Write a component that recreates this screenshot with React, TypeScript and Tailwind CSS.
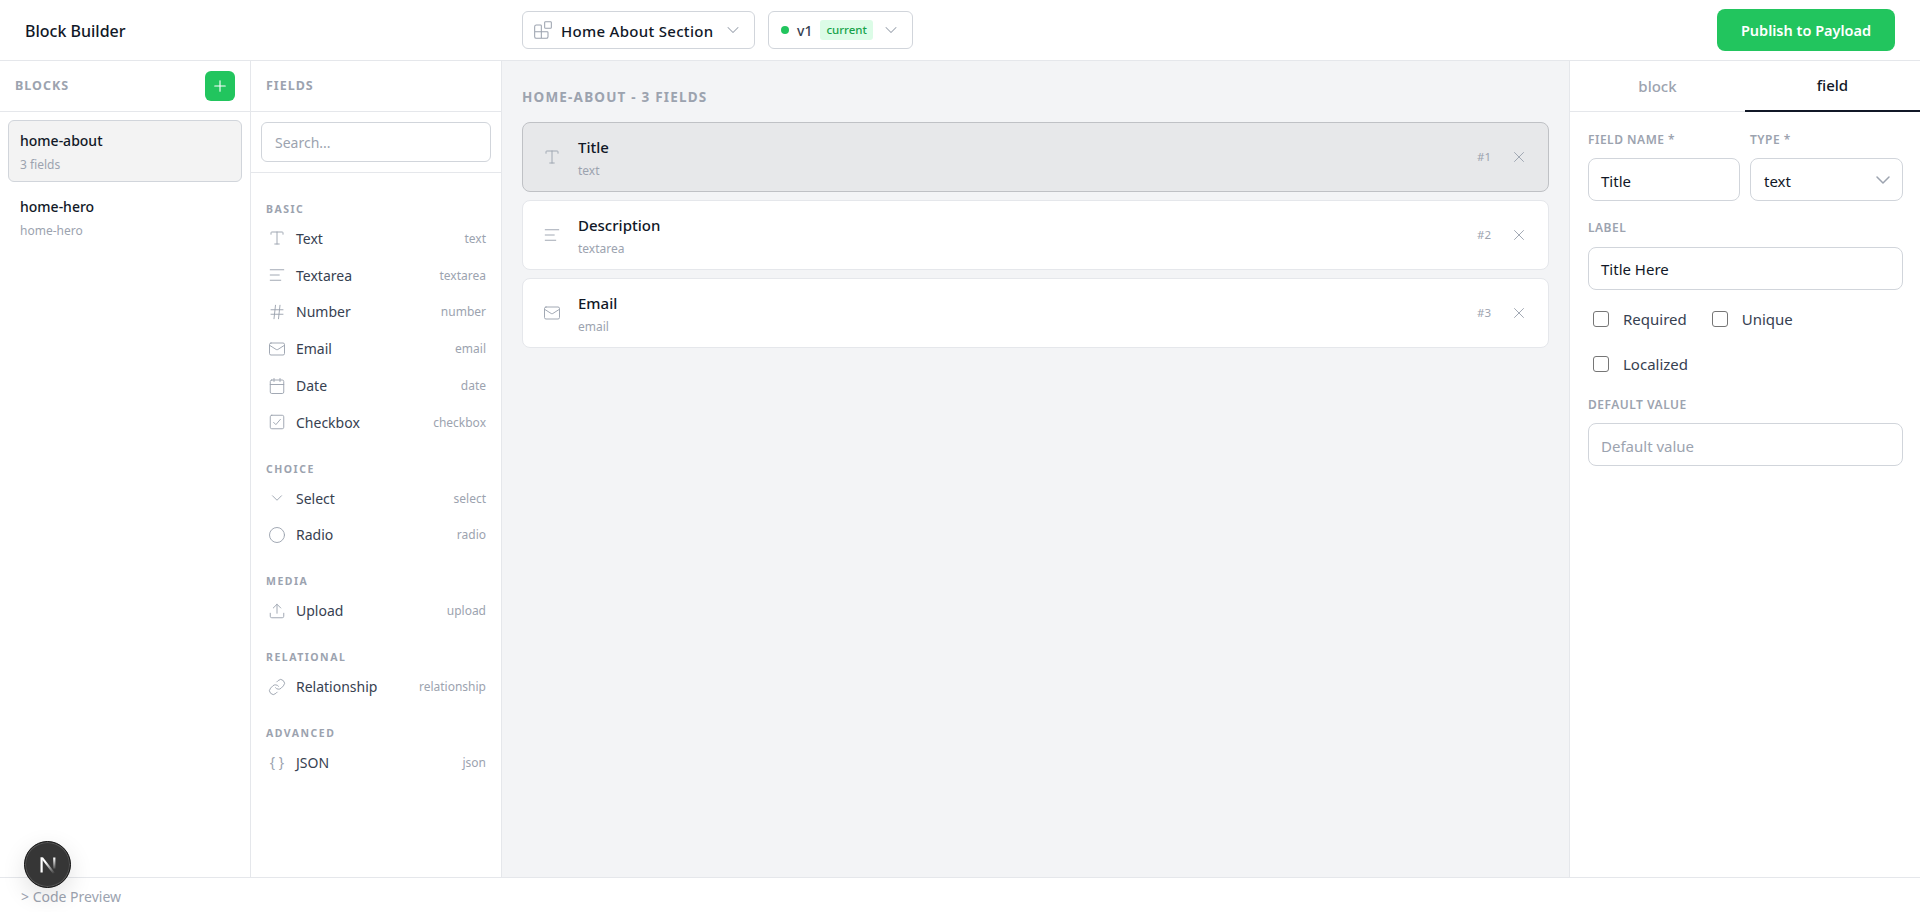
import { Blocks, Calendar, ChevronDown, Circle, Hash, Link, AlignLeft, Mail, Plus, Type, Upload, X } from "lucide-react";
import type { ComponentType } from "react";

const font = { fontFamily: '"Noto Sans", "Open Sans", sans-serif' };

// checkbox icon, the check is bigger than lucide's one
function CheckIcon({ size = 18, strokeWidth = 1.25 }: { size?: number; strokeWidth?: number }) {
  return (
    <svg width={size} height={size} viewBox="0 0 24 24" fill="none" stroke="currentColor" strokeWidth={strokeWidth} strokeLinecap="round" strokeLinejoin="round">
      <rect x="3" y="3" width="18" height="18" rx="2" />
      <path d="m7.5 12.5 3 3 6-7" />
    </svg>
  );
}

type Item = { label: string; type: string; Icon?: ComponentType<any> };

const groups: { name: string; items: Item[]; mt: string }[] = [
  {
    name: "BASIC",
    mt: "mt-[30px]",
    items: [
      { label: "Text", type: "text", Icon: Type },
      { label: "Textarea", type: "textarea", Icon: AlignLeft },
      { label: "Number", type: "number", Icon: Hash },
      { label: "Email", type: "email", Icon: Mail },
      { label: "Date", type: "date", Icon: Calendar },
      { label: "Checkbox", type: "checkbox", Icon: CheckIcon },
    ],
  },
  {
    name: "CHOICE",
    mt: "mt-[22px]",
    items: [
      { label: "Select", type: "select", Icon: ChevronDown },
      { label: "Radio", type: "radio", Icon: Circle },
    ],
  },
  { name: "MEDIA", mt: "mt-[22px]", items: [{ label: "Upload", type: "upload", Icon: Upload }] },
  { name: "RELATIONAL", mt: "mt-[22px]", items: [{ label: "Relationship", type: "relationship", Icon: Link }] },
  { name: "ADVANCED", mt: "mt-[22px]", items: [{ label: "JSON", type: "json" }] },
];

const fields = [
  { name: "Title", type: "text", Icon: Type, active: true },
  { name: "Description", type: "textarea", Icon: AlignLeft, active: false },
  { name: "Email", type: "email", Icon: Mail, active: false },
];

function FieldLabel({ children }: { children: string }) {
  return <div className="h-[16px] text-[12px] leading-[18px] font-semibold tracking-[0.5px] text-[#9ca3af]">{children}</div>;
}

function Check({ label }: { label: string }) {
  return (
    <div className="flex items-center">
      <span className="w-4 h-4 rounded-[3px] border border-[#767676] bg-white mr-[14px]" />
      <span className="text-[15px] leading-[20px] text-[#374151]">{label}</span>
    </div>
  );
}

export default function App() {
  return (
    <div style={font} className="h-[912px] w-[1920px] flex flex-col bg-white overflow-hidden relative text-[#111827]">
      {/* top bar */}
      <header className="h-[61px] shrink-0 border-b border-[#e5e7eb] flex items-center pl-[25px] pr-[25px]">
        <div className="w-[497px] pt-[2px] text-[16px] font-medium">Block Builder</div>
        <div className="h-[38px] w-[233px] border border-[#d1d5db] rounded-[6px] flex items-center pl-[10px] pr-[11px]">
          <Blocks size={20} strokeWidth={1.25} className="text-[#9ca3af]" />
          <span className="ml-[8px] pt-[2px] text-[15px] font-medium tracking-[0.3px]">Home About Section</span>
          <ChevronDown size={20} strokeWidth={1.25} className="ml-auto text-[#9ca3af]" />
        </div>
        <div className="ml-[13px] h-[38px] w-[145px] border border-[#d1d5db] rounded-[6px] flex items-center pl-[12px] pr-[11px]">
          <span className="w-2 h-2 rounded-full bg-[#22c55e]" />
          <span className="ml-[8px] pt-[1px] text-[14px] font-medium text-[#374151]">v1</span>
          <span className="ml-[8px] h-5 px-[6px] rounded-[3px] bg-[#dcfce7] text-[#16a34a] text-[11.5px] leading-[20px] font-medium">current</span>
          <ChevronDown size={20} strokeWidth={1.25} className="ml-auto text-[#9ca3af]" />
        </div>
        <button className="ml-auto h-[42px] w-[178px] pt-[2px] rounded-[8px] bg-[#22c55e] text-white text-[14.5px] font-semibold">
          Publish to Payload
        </button>
      </header>

      <div className="flex-1 flex min-h-0">
        {/* blocks */}
        <aside className="w-[251px] shrink-0 border-r border-[#e5e7eb]">
          <div className="h-[51px] border-b border-[#e5e7eb] flex items-center justify-between pl-[15px] pr-[15px]">
            <span className="text-[12.5px] font-bold tracking-[1px] text-[#9ca3af]">BLOCKS</span>
            <span className="w-[30px] h-[30px] rounded-[6px] bg-[#22c55e] flex items-center justify-center text-white">
              <Plus size={18} strokeWidth={1.5} />
            </span>
          </div>
          <div className="pt-2 px-2">
            <div className="h-[62px] rounded-[6px] border border-[#d1d5db] bg-[#f3f3f3] pl-[11px] pt-[10px]">
              <div className="text-[14px] leading-[20px] font-medium">home-about</div>
              <div className="mt-[6px] text-[12px] leading-[16px] text-[#9ca3af]">3 fields</div>
            </div>
            <div className="mt-[5px] h-[60px] pl-[12px] pt-[10px]">
              <div className="text-[14px] leading-[20px] font-medium">home-hero</div>
              <div className="mt-[6px] text-[12px] leading-[16px] text-[#9ca3af]">home-hero</div>
            </div>
          </div>
        </aside>

        {/* field palette */}
        <aside className="w-[251px] shrink-0 border-r border-[#e5e7eb]">
          <div className="h-[51px] border-b border-[#e5e7eb] flex items-center pl-[15px]">
            <span className="text-[12.5px] font-bold tracking-[1px] text-[#9ca3af]">FIELDS</span>
          </div>
          <div className="h-[61px] border-b border-[#e5e7eb] px-[10px] pt-[10px]">
            <div className="h-[40px] rounded-[6px] border border-[#d1d5db] flex items-center pl-[13px] text-[14px] text-[#9ca3af]">
              Search...
            </div>
          </div>
          <div className="pl-[15px] pr-[15px]">
            {groups.map((g) => (
              <div key={g.name} className={g.mt}>
                <div className="h-[12px] text-[10.5px] leading-[12px] font-bold tracking-[1.5px] text-[#9ca3af]">{g.name}</div>
                <div className="mt-[5px]">
                  {g.items.map(({ label, type, Icon }) => (
                    <div key={label} className="h-[36.8px] flex items-center">
                      <span className="w-[22px] flex justify-center text-[#9ca3af]">
                        {Icon ? <Icon size={18} strokeWidth={1.25} /> : <span className="text-[14px] leading-[16px] whitespace-nowrap">{"{ }"}</span>}
                      </span>
                      <span className="ml-[8px] text-[14px] text-[#374151]">{label}</span>
                      <span className="ml-auto pt-[1px] text-[12px] text-[#9ca3af]">{type}</span>
                    </div>
                  ))}
                </div>
              </div>
            ))}
          </div>
        </aside>

        {/* canvas */}
        <main className="flex-1 bg-[#f3f4f6] px-[20px] pt-[26px]">
          <div className="h-[20px] text-[13.5px] leading-[21px] font-bold tracking-[1.2px] text-[#9ca3af]">HOME-ABOUT - 3 FIELDS</div>
          <div className="mt-[15px] flex flex-col gap-2">
            {fields.map(({ name, type, Icon, active }, i) => (
              <div
                key={name}
                className={`h-[70px] rounded-[8px] border flex items-center pl-[20px] pr-[20px] ${
                  active ? "bg-[#e7e8ea] border-[#bfc1c5]" : "bg-white border-[#e5e7eb]"
                }`}
              >
                <Icon size={18} strokeWidth={1.25} className="text-[#9ca3af]" />
                <div className="ml-[17px] pt-[2px]">
                  <div className="text-[15px] leading-[20px] font-medium">{name}</div>
                  <div className="mt-[6px] text-[12px] leading-[16px] text-[#9ca3af]">{type}</div>
                </div>
                <span className="ml-auto text-[11.5px] text-[#9ca3af]">#{i + 1}</span>
                <X size={18} strokeWidth={1.25} className="ml-[19px] text-[#9ca3af]" />
              </div>
            ))}
          </div>
        </main>

        {/* properties */}
        <aside className="w-[351px] shrink-0 border-l border-[#e5e7eb]">
          <div className="h-[51px] border-b border-[#e5e7eb] flex">
            <div className="flex-1 flex items-center justify-center text-[15px] font-medium text-[#9ca3af]">block</div>
            <div className="flex-1 flex items-center justify-center text-[15px] font-medium border-b-2 border-[#111827] h-[51px]">field</div>
          </div>
          <div className="pl-[18px] pr-[17px] pt-[19px]">
            <div className="grid grid-cols-[152px_1fr] gap-x-[10px]">
              <div>
                <FieldLabel>FIELD NAME *</FieldLabel>
                <div className="mt-[11px] h-[43px] rounded-[8px] border border-[#d1d5db] flex items-center pl-[12px] pt-[3px] text-[15px]">Title</div>
              </div>
              <div>
                <FieldLabel>TYPE *</FieldLabel>
                <div className="mt-[11px] h-[43px] rounded-[8px] border border-[#d1d5db] flex items-center justify-between pl-[13px] pr-[7px] text-[15px]">
                  <span className="pt-[3px]">text</span>
                  <ChevronDown size={24} strokeWidth={1.5} className="text-[#9ca3af]" />
                </div>
              </div>
            </div>
            <div className="mt-[18px]">
              <FieldLabel>LABEL</FieldLabel>
              <div className="mt-[12px] h-[43px] rounded-[8px] border border-[#d1d5db] flex items-center pl-[12px] pt-[2px] text-[15px]">Title Here</div>
            </div>
            <div className="mt-[19px] pl-[5px] flex flex-wrap gap-x-[25px] gap-y-[25px] w-[240px]">
              <Check label="Required" />
              <Check label="Unique" />
              <Check label="Localized" />
            </div>
            <div className="mt-[22px]">
              <FieldLabel>DEFAULT VALUE</FieldLabel>
              <div className="mt-[11px] h-[43px] rounded-[8px] border border-[#d1d5db] flex items-center pl-[12px] pt-[3px] text-[15px] text-[#9ca3af]">Default value</div>
            </div>
          </div>
        </aside>
      </div>

      {/* code preview bar */}
      <div className="h-[35px] shrink-0 border-t border-[#e5e7eb] bg-white flex items-center pl-[21px] pt-[3px] text-[14px] text-[#9ca3af]">
        &gt; Code Preview
      </div>

      {/* next dev indicator */}
      <div className="absolute left-[24px] top-[841px] w-[47px] h-[47px] rounded-full bg-[#363636] border border-[#111] shadow-[inset_0_0_0_1px_#555,0_8px_24px_rgba(0,0,0,0.12)] flex items-center justify-center">
        <svg width="20" height="20" viewBox="0 0 20 20" fill="none">
          <defs>
            <linearGradient id="nfade" x1="8" y1="7" x2="17" y2="18" gradientUnits="userSpaceOnUse">
              <stop stopColor="#fff" />
              <stop offset="1" stopColor="#fff" stopOpacity="0" />
            </linearGradient>
            <linearGradient id="nfade2" x1="16" y1="3" x2="16" y2="13" gradientUnits="userSpaceOnUse">
              <stop stopColor="#fff" />
              <stop offset="1" stopColor="#fff" stopOpacity="0.2" />
            </linearGradient>
          </defs>
          <path d="M2.5 2.5h2.2v15H2.5z" fill="#fff" />
          <path d="M2.5 2.5h2.6l12.4 16h-2.8z" fill="url(#nfade)" />
          <path d="M15.2 2.5h2.2v11h-2.2z" fill="url(#nfade2)" />
        </svg>
      </div>
    </div>
  );
}
